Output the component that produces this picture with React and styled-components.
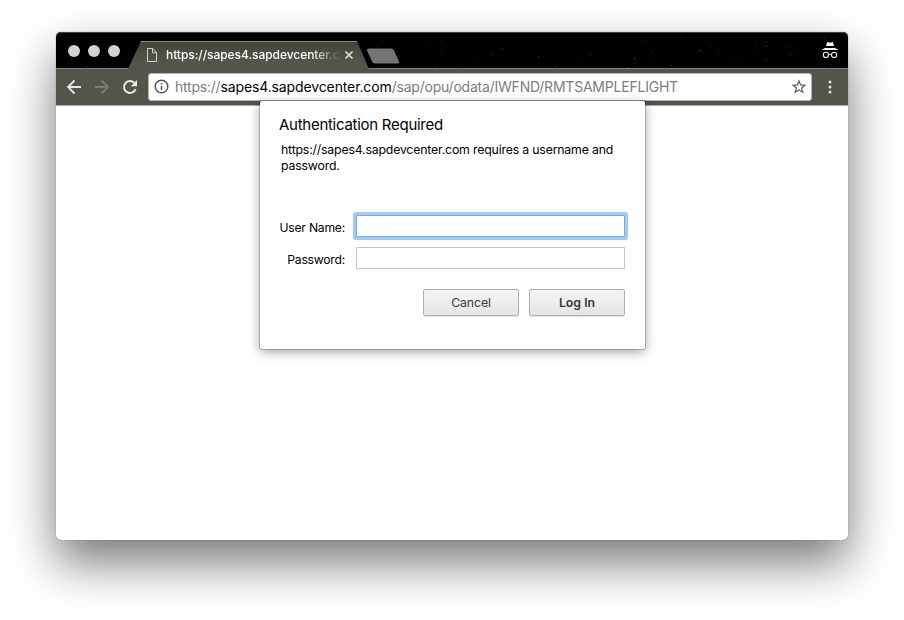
import React from 'react';
import styled, { createGlobalStyle } from 'styled-components';

const Global = createGlobalStyle`
  * { box-sizing: border-box; }
  body {
    margin: 0;
    background: #fff;
    font-family: Inter, "Liberation Sans", sans-serif;
    overflow: hidden;
  }
`;

const Desktop = styled.main`
  height: 620px;
  padding: 32px 56px 80px;
  background: #fff;
`;

const Window = styled.section`
  position: relative;
  width: 792px;
  height: 508px;
  border-radius: 5px;
  background: #fff;
  box-shadow: 0 0 1px rgba(0, 0, 0, 0.6), 0 23px 48px rgba(0, 0, 0, 0.53);
`;

const TitleBar = styled.header`
  position: relative;
  display: flex;
  align-items: flex-end;
  height: 37px;
  background: #000;
  border-radius: 5px 5px 0 0;
  box-shadow: inset 0 1px 0 #3d4142, inset 0 -1px 0 #85857f;
`;

const StarField = styled.svg`
  position: absolute;
  inset: 0;
`;

const Lights = styled.div`
  display: flex;
  gap: 8px;
  width: 72px;
  padding-left: 12px;
  align-self: center;
`;

const Light = styled.span`
  flex: none;
  width: 12px;
  height: 12px;
  border-radius: 50%;
  background: #d2d2d2;
`;

const Tab = styled.div`
  position: relative;
  display: flex;
  align-items: center;
  width: 241px;
  height: 28px;
  padding: 0 0 1px 19px;
  color: #fff;
  background: linear-gradient(#8c8c86 0 1px, #43433a 1px, #54544d 70%);
  clip-path: polygon(13px 0, 229px 0, 241px 100%, 0 100%);
`;

const TabTitle = styled.span`
  width: 174px;
  margin: 0 5px 0 9px;
  overflow: hidden;
  white-space: nowrap;
  font-size: 12px;
  font-weight: 500;
  letter-spacing: -0.05px;
  mask-image: linear-gradient(90deg, #000 145px, transparent 175px);
`;

const NewTab = styled.svg`
  position: relative;
  margin: 0 0 5px -3px;
`;

const Incognito = styled.svg`
  position: relative;
  margin: 0 9px 10px auto;
`;

const Toolbar = styled.nav`
  display: flex;
  align-items: center;
  height: 37px;
  padding: 0 14px 1px 10px;
  background: #54544c;
  border-bottom: 1px solid #aaa9a5;
`;

const NavIcons = styled.div`
  display: flex;
  gap: 12px;
  width: 82px;
`;

const Omnibox = styled.div`
  display: flex;
  align-items: center;
  width: 664px;
  height: 28px;
  padding: 0 5px 0 5px;
  background: #fff;
  border: 1px solid #b4b3af;
  border-radius: 3px;
`;

const Address = styled.span`
  flex: 1;
  margin-left: 6px;
  color: #7d7d7d;
  font-size: 14px;
  letter-spacing: -0.22px;
  white-space: nowrap;
  b { color: #000; font-weight: 400; letter-spacing: -0.12px; }
`;

const MenuDots = styled.svg`
  margin-left: auto;
`;

const Dialog = styled.form`
  position: absolute;
  left: 204px;
  top: 69px;
  width: 385px;
  height: 248px;
  padding: 15px 20px 0 19px;
  color: #000;
  background: #fff;
  border-radius: 2px;
  box-shadow: 0 0 0 1px rgba(0, 0, 0, 0.22), 0 3px 12px rgba(0, 0, 0, 0.36);
`;

const Heading = styled.h1`
  margin: 0;
  font-size: 15px;
  line-height: 18px;
  font-weight: 400;
  letter-spacing: -0.27px;
`;

const Message = styled.p`
  height: 73px;
  margin: 8px 0 0 2px;
  font-size: 12.3px;
  line-height: 16px;
  letter-spacing: -0.18px;
`;

const Field = styled.label`
  display: grid;
  grid-template-columns: 66px 269px;
  column-gap: 11px;
  align-items: center;
  height: 22px;
  margin-bottom: 10px;
  font-size: 12.2px;
  letter-spacing: -0.24px;
  white-space: nowrap;
  text-align: right;
  span { padding-top: 3px; }
`;

const Input = styled.input`
  width: 269px;
  height: 22px;
  border: 1px solid ${(p) => (p.$active ? '#7fa9d6' : '#c6c6c6')};
  box-shadow: ${(p) => (p.$active ? '0 0 0 3px #9fcbfb' : 'none')};
  border-radius: ${(p) => (p.$active ? '1px' : '0')};
  outline: none;
  background: #fff;
`;

const Actions = styled.div`
  display: flex;
  justify-content: flex-end;
  gap: 10px;
  margin-top: 20px;
`;

const Button = styled.button`
  width: 96px;
  height: 27px;
  padding: 0;
  color: #383838;
  font: ${(p) => (p.$primary ? 600 : 400)} 12.3px Inter, "Liberation Sans", sans-serif;
  letter-spacing: ${(p) => (p.$primary ? '0' : '-0.1px')};
  background: linear-gradient(#f4f4f4, #efefef 40%, #e4e4e4);
  border: 1px solid #b0b0b0;
  border-radius: 2px;
  box-shadow: 0 1px 1px rgba(0, 0, 0, 0.12);
`;

const STARS = [
  [384, 10, 0.3], [399, 13, 0.2], [436, 15, 0.3], [446, 18, 0.45], [436, 24, 0.5],
  [440, 26, 0.2], [482, 26, 0.7], [380, 36, 0.5], [402, 36, 0.5], [420, 30, 0.3],
  [384, 22, 0.3], [500, 36, 0.6], [506, 8, 0.3], [513, 13, 0.3], [531, 15, 0.3],
  [534, 24, 0.4], [522, 30, 0.3], [571, 37, 0.6], [578, 28, 0.8], [586, 11, 0.4],
  [593, 32, 0.3], [596, 22, 0.5], [615, 35, 0.8], [625, 7, 0.4], [640, 21, 0.3],
  [644, 20, 0.7], [654, 15, 0.5], [662, 22, 0.4], [677, 26, 0.3], [682, 32, 0.5],
  [698, 22, 0.4], [699, 12, 0.4], [710, 16, 0.8], [710, 30, 0.5], [730, 16, 0.4],
  [734, 24, 0.4], [738, 20, 0.4], [762, 34, 0.4], [768, 8, 0.4], [774, 12, 0.3],
  [775, 34, 0.4], [326, 10, 0.3], [350, 21, 0.3], [372, 14, 0.3], [22, 8, 0.3],
  [42, 10, 0.3], [65, 6, 0.3], [15, 30, 0.3], [31, 36, 0.4], [68, 30, 0.3],
  [96, 5, 0.3], [462, 28, 0.2], [552, 18, 0.2], [632, 18, 0.2],
];

export default function App() {
  return (
    <Desktop>
      <Global />
      <Window>
        <TitleBar>
          <StarField width="792" height="36">
            {STARS.map(([x, y, o]) => (
              <rect key={`${x}-${y}`} x={x} y={y - 2} width="1" height="1" fill="#fff" opacity={o * 0.4} />
            ))}
          </StarField>
          <Lights><Light /><Light /><Light /></Lights>
          <Tab>
            <svg width="10" height="14" viewBox="0 0 10 14" fill="none" stroke="#d2d2cf">
              <path d="M.5.5h5.3l3.7 4v9h-9zM5.5.5v4.3h4" />
            </svg>
            <TabTitle>https://sapes4.sapdevcenter.co</TabTitle>
            <svg width="8" height="8" viewBox="0 0 8 8" stroke="#d8d8d6" strokeWidth="1.6">
              <path d="M.5.5l7 7M7.500.5l-7 7" />
            </svg>
          </Tab>
          <NewTab width="34" height="16" viewBox="0 0 34 16">
            <path d="M3 .5h22q2 0 3 2l5 11q.6 2-1 2H9q-2 0-3-2L1 2.500Q.6.5 3 .5z" fill="#747474" />
          </NewTab>
          <Incognito width="18" height="17" viewBox="0 0 18 17" fill="#f4f4f4">
            <path d="M6.200 0l2.800.7L11.800 0 13 4H5zM4 6h10l3.600 1.900H.4z" />
            <g fill="none" stroke="#eee" strokeWidth="1.100">
              <circle cx="4.900" cy="12.900" r="2.600" />
              <circle cx="13.100" cy="12.900" r="2.600" />
              <path d="M7.500 12.600q1.500-.7 3 0" />
            </g>
          </Incognito>
        </TitleBar>
        <Toolbar>
          <NavIcons>
            <svg width="16" height="16" viewBox="0 0 16 16" fill="none" stroke="#e8e8e6" strokeWidth="1.800">
              <path d="M15 8H2.500M8.500 1.500L2 8l6.500 6.500" />
            </svg>
            <svg width="16" height="16" viewBox="0 0 16 16" fill="none" stroke="#7c7c76" strokeWidth="1.800">
              <path d="M1 8h12.500M7.500 1.500L14 8l-6.500 6.500" />
            </svg>
            <svg width="16" height="16" viewBox="0 0 16 16">
              <path d="M13.600 10.200A6 6 0 1 1 12.300 3.800" fill="none" stroke="#e8e8e6" strokeWidth="2" />
              <path d="M15 1v6.200H8.800z" fill="#e8e8e6" />
            </svg>
          </NavIcons>
          <Omnibox>
            <svg width="15" height="15" viewBox="0 0 15 15" fill="none" stroke="#555" strokeWidth="1.500">
              <circle cx="7.500" cy="7.500" r="6.300" />
              <path d="M7.500 6.700V11M7.500 4v1.600" />
            </svg>
            <Address>https://<b>sapes4.sapdevcenter.com</b>/sap/opu/odata/IWFND/RMTSAMPLEFLIGHT</Address>
            <svg width="15" height="15" viewBox="0 0 15 15" fill="none" stroke="#616161" strokeWidth="1.300">
              <path d="M8 2l1.600 3.900 4.300.35-3.250 2.800 1 4.150L8 11l-3.650 2.200 1-4.150L2.100 6.250l4.300-.35z" />
            </svg>
          </Omnibox>
          <MenuDots width="8" height="14" viewBox="0 0 8 14" fill="#e2e2df">
            <circle cx="4" cy="2" r="1.500" />
            <circle cx="4" cy="7" r="1.500" />
            <circle cx="4" cy="12" r="1.500" />
          </MenuDots>
        </Toolbar>
        <Dialog onSubmit={(e) => e.preventDefault()}>
          <Heading>Authentication Required</Heading>
          <Message>https://sapes4.sapdevcenter.com requires a username and password.</Message>
          <Field><span>User Name:</span><Input $active type="text" /></Field>
          <Field><span>Password:</span><Input type="password" /></Field>
          <Actions>
            <Button type="button">Cancel</Button>
            <Button $primary type="submit">Log In</Button>
          </Actions>
        </Dialog>
      </Window>
    </Desktop>
  );
}
